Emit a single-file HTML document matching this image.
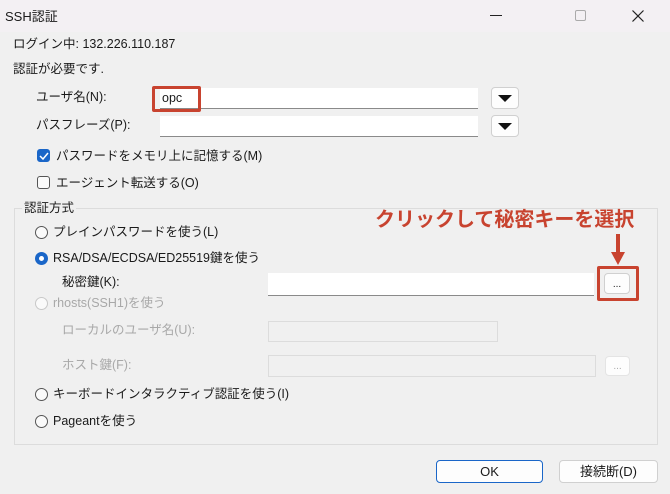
<!DOCTYPE html>
<html><head><meta charset="utf-8"><style>
*{margin:0;padding:0;box-sizing:border-box}
body{width:670px;height:494px;background:#f0f0f0;font-family:"Liberation Sans","Noto Sans CJK JP",sans-serif;font-size:12.5px;color:#1a1a1a;position:relative;overflow:hidden}
.a{position:absolute;white-space:nowrap;line-height:16px}
.title{position:absolute;left:0;top:0;width:670px;height:32px;background:#f3f0f3}
.in{position:absolute;background:#fff;border-bottom:1px solid #8a8a8a}
.dis{position:absolute;background:#f0f0f0;border:1px solid #dcdcdc}
.btn{position:absolute;background:#fdfdfd;border:1px solid #d0d0d0;border-radius:4px;text-align:center}
.rad{position:absolute;width:13px;height:13px;border:1px solid #555;border-radius:50%;background:#fafafa}
.chk{position:absolute;width:13px;height:13px;border:1px solid #555;border-radius:3px;background:#fafafa}
.g{color:#a8a8a8}
</style></head><body>
<div class="title"></div>
<div class="a" style="left:5px;top:9px;font-size:13px">SSH認証</div>
<div class="a" style="left:490px;top:15px;width:12px;height:1px;background:#222"></div>
<div class="a" style="left:575px;top:10px;width:11px;height:11px;border:1px solid #aaa;border-radius:2px"></div>
<svg class="a" style="left:632px;top:10px" width="12" height="12"><path d="M0.5 0.5L11.5 11.5M11.5 0.5L0.5 11.5" stroke="#222" stroke-width="1.2"/></svg>

<div class="a" style="left:13px;top:36px">ログイン中: 132.226.110.187</div>
<div class="a" style="left:13px;top:61px">認証が必要です.</div>

<div class="a" style="left:36px;top:89px">ユーザ名(N):</div>
<div class="in" style="left:160px;top:88px;width:318px;height:21px"></div>
<div class="a" style="left:162px;top:90px">opc</div>
<div class="a" style="left:152px;top:86px;width:49px;height:26px;border:3px solid #c8432f;border-radius:2px"></div>
<div class="btn" style="left:491px;top:87px;width:28px;height:22px"></div>
<svg class="a" style="left:498px;top:95px" width="14" height="8"><path d="M0 0H14L7 7Z" fill="#111"/></svg>

<div class="a" style="left:36px;top:117px">パスフレーズ(P):</div>
<div class="in" style="left:160px;top:116px;width:318px;height:21px"></div>
<div class="btn" style="left:491px;top:115px;width:28px;height:22px"></div>
<svg class="a" style="left:498px;top:123px" width="14" height="8"><path d="M0 0H14L7 7Z" fill="#111"/></svg>

<div class="chk" style="left:37px;top:149px;background:#1a66c8;border-color:#1a66c8"></div>
<svg class="a" style="left:39px;top:151px" width="10" height="10"><path d="M1 5L4 8L9 2" stroke="#fff" stroke-width="1.5" fill="none"/></svg>
<div class="a" style="left:56px;top:148px">パスワードをメモリ上に記憶する(M)</div>
<div class="chk" style="left:37px;top:176px"></div>
<div class="a" style="left:56px;top:175px">エージェント転送する(O)</div>

<div class="a" style="left:14px;top:208px;width:644px;height:237px;border:1px solid #dcdcdc"></div>
<div class="a" style="left:22px;top:200px;background:#f0f0f0;padding:0 2px">認証方式</div>

<div class="a" style="left:375px;top:207px;font-size:20px;font-weight:bold;color:#c8432f;line-height:26px">クリックして秘密キーを選択</div>
<svg class="a" style="left:610px;top:234px" width="16" height="32"><path d="M6 0H10V18H15L8 31L1 18H6Z" fill="#c8432f"/></svg>

<div class="rad" style="left:35px;top:226px"></div>
<div class="a" style="left:53px;top:224px">プレインパスワードを使う(L)</div>
<div class="rad" style="left:35px;top:252px;border:4px solid #1a66c8;background:#fff"></div>
<div class="a" style="left:53px;top:250px">RSA/DSA/ECDSA/ED25519鍵を使う</div>
<div class="a" style="left:62px;top:274px">秘密鍵(K):</div>
<div class="in" style="left:268px;top:273px;width:326px;height:23px"></div>
<div class="a" style="left:597px;top:266px;width:42px;height:35px;border:3px solid #c8432f;border-radius:2px"></div>
<div class="btn" style="left:604px;top:273px;width:26px;height:21px;font-size:10px;line-height:22px">...</div>

<div class="rad" style="left:35px;top:297px;border-color:#c8c8c8"></div>
<div class="a g" style="left:53px;top:295px">rhosts(SSH1)を使う</div>
<div class="a g" style="left:62px;top:322px">ローカルのユーザ名(U):</div>
<div class="dis" style="left:268px;top:321px;width:230px;height:21px"></div>
<div class="a g" style="left:62px;top:357px">ホスト鍵(F):</div>
<div class="dis" style="left:268px;top:355px;width:328px;height:22px"></div>
<div class="btn" style="left:605px;top:356px;width:25px;height:20px;border-color:#e4e4e4;color:#aaa;font-size:10px;line-height:20px">...</div>

<div class="rad" style="left:35px;top:388px"></div>
<div class="a" style="left:53px;top:386px">キーボードインタラクティブ認証を使う(I)</div>
<div class="rad" style="left:35px;top:415px"></div>
<div class="a" style="left:53px;top:413px">Pageantを使う</div>

<div class="btn" style="left:436px;top:460px;width:107px;height:23px;border:1px solid #1a66c8;line-height:21px;font-size:13px">OK</div>
<div class="btn" style="left:559px;top:460px;width:99px;height:23px;line-height:21px;font-size:13px">接続断(D)</div>
</body></html>
